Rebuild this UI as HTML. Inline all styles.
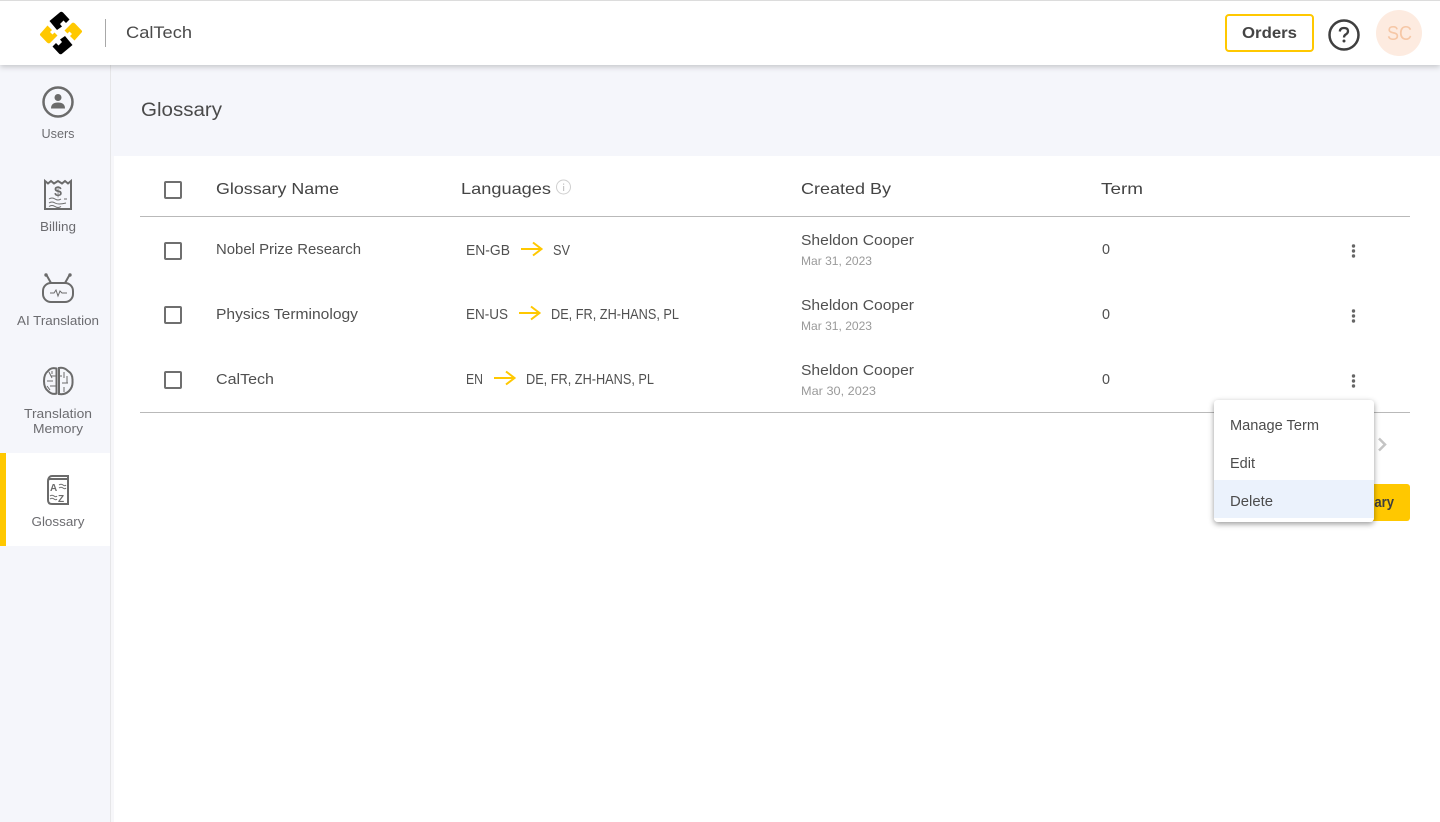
<!DOCTYPE html>
<html><head><meta charset="utf-8"><title>Glossary</title>
<style>
html,body{margin:0;padding:0;width:1440px;height:822px;overflow:hidden;background:#fff}
svg{display:block}
text{font-family:"Liberation Sans",sans-serif;fill:#4a4a4a}
.h{font-size:16px;fill:#444}
.r{font-size:15px;fill:#505050}
.d{font-size:12px;fill:#9a9a9a}
.n{font-size:12.500px;fill:#6c6c70;text-anchor:middle}
.m{font-size:14.500px;fill:#4c4c4c}
.cb{fill:none;stroke:#6f6f6f;stroke-width:2}
.ic{fill:none;stroke:#6b6b6b;stroke-width:2}
.thin{fill:none;stroke:#6b6b6b;stroke-width:1}
.ar{fill:none;stroke:#ffc800;stroke-width:2}
.dot{fill:#666}
</style></head><body>
<svg width="1440" height="822" viewBox="0 0 1440 822" xmlns="http://www.w3.org/2000/svg">
<defs>
<filter id="sh" x="-10%" y="-20%" width="120%" height="150%"><feDropShadow dx="0" dy="2" stdDeviation="3" flood-color="#000" flood-opacity=".2"/></filter>
<filter id="mn" x="-20%" y="-20%" width="140%" height="150%"><feDropShadow dx="0" dy="2" stdDeviation="3" flood-color="#000" flood-opacity=".4"/></filter>
</defs>
<rect width="1440" height="822" fill="#fff"/>
<!-- sidebar + title band -->
<rect x="0" y="65" width="1440" height="91" fill="#f5f6fb"/>
<rect x="0" y="65" width="110" height="757" fill="#f5f6fb"/>
<rect x="110" y="65" width="1" height="757" fill="#e6e6e8"/>
<rect x="111" y="156" width="3" height="666" fill="#f7f7fa"/>
<!-- active nav -->
<rect x="0" y="453" width="110" height="93" fill="#fff"/>
<rect x="0" y="453" width="6" height="93" fill="#ffc800"/>
<!-- header -->
<rect x="0" y="0" width="1440" height="65" fill="#fff" filter="url(#sh)"/>
<rect x="0" y="0" width="1440" height="1" fill="#dcdcdc"/>
<!-- logo -->
<g id="logo">
<path d="M49.500 21L60 12.300Q61.500 11 63 12.500L69.500 19.500L66 23L63.500 20.500L60 24L62 26.500L57 30Z" fill="#000"/>
<path d="M49.500 21L60 12.300Q61.500 11 63 12.500L69.500 19.500L66 23L63.500 20.500L60 24L62 26.500L57 30Z" fill="#000" transform="rotate(180 61 33)"/>
<path d="M40 34L47.500 25.500L52 30L50 32L52.500 34.500L54.500 32.500L57.500 35.500L50 43Q48.500 44 47 42.500L40.800 36Q39.500 35 40 34Z" fill="#ffc800"/>
<path d="M40 34L47.500 25.500L52 30L50 32L52.500 34.500L54.500 32.500L57.500 35.500L50 43Q48.500 44 47 42.500L40.800 36Q39.500 35 40 34Z" fill="#ffc800" transform="rotate(180 61 33)"/>
</g>
<rect x="105" y="19" width="1" height="28" fill="#a8a8a8"/>
<text x="126" y="38" textLength="66" lengthAdjust="spacingAndGlyphs" style="font-size:17px;fill:#4a4a4a">CalTech</text>
<!-- orders -->
<rect x="1226" y="15" width="87" height="36" rx="3" fill="#fff" stroke="#ffc800" stroke-width="2"/>
<text x="1242" y="38" textLength="55" lengthAdjust="spacingAndGlyphs" style="font-size:16px;font-weight:700;fill:#444">Orders</text>
<circle cx="1344" cy="35" r="14.500" fill="none" stroke="#3f3f3f" stroke-width="2.500"/>
<path d="M1339.800 31.500Q1340 28 1344 28Q1348 28 1348 31Q1348 33 1346 34.300Q1344 35.300 1344 37.500" fill="none" stroke="#3f3f3f" stroke-width="2.300"/>
<circle cx="1344" cy="41" r="1.500" fill="#3f3f3f"/>
<circle cx="1399" cy="33" r="23" fill="#fdebe0"/>
<text x="1387" y="40" textLength="25" lengthAdjust="spacingAndGlyphs" style="font-size:20px;fill:#f6c7a6">SC</text>
<!-- title -->
<text x="141" y="116" textLength="81" lengthAdjust="spacingAndGlyphs" style="font-size:19px;fill:#4a4a4a">Glossary</text>
<!-- nav: users -->
<circle cx="58" cy="102" r="14.500" fill="none" stroke="#6b6b6b" stroke-width="2.500"/>
<circle cx="58" cy="97.500" r="3.500" fill="#6b6b6b"/>
<path d="M51 108.500Q51 102.500 58 102.500Q65 102.500 65 108.500Z" fill="#6b6b6b"/>
<text class="n" x="58" y="138" textLength="33" lengthAdjust="spacingAndGlyphs">Users</text>
<!-- billing -->
<path class="ic" d="M45 181V209H71V181L68 183.500L65 181L62 183.500L58 181L54 183.500L51 181L48 183.500Z"/>
<text x="58" y="196" text-anchor="middle" style="font-size:14px;font-weight:700;fill:#6b6b6b">$</text>
<path class="thin" stroke-width="1.500" d="M49 199Q52 197 55 199T61 199M49 203Q52 201 55 203T66 203M49 206.500Q52 204.500 55 206.500T61 206.500"/>
<path class="thin" d="M64 199H67"/>
<text class="n" x="58" y="231" textLength="36" lengthAdjust="spacingAndGlyphs">Billing</text>
<!-- AI -->
<rect x="43" y="283" width="30" height="19" rx="8" class="ic" stroke-width="2.500"/>
<path class="ic" d="M51 283L46.500 275M65 283L69.500 275"/>
<circle cx="46" cy="275" r="1.700" fill="#6b6b6b"/><circle cx="70" cy="275" r="1.700" fill="#6b6b6b"/>
<path class="thin" d="M50 293H54L56 290L58 296L60 291L62 293H67"/>
<text class="n" x="58" y="325" textLength="82" lengthAdjust="spacingAndGlyphs">AI Translation</text>
<!-- memory -->
<path d="M56.500 368.500Q51 367 48 371Q44 374 44 381Q44 388 48 391Q52 395 56.500 393.500Z" class="ic"/>
<path d="M59 368V394Q65 395 69 391Q73 387 72.500 381Q73 374 68 371Q64 367 59 368Z" class="ic" stroke-width="1.500"/>
<path class="thin" stroke-width="1.500" d="M56 376H51M47 381H53M56 386H50M49 372L52 378M64 372V378M67 376V383M62 383H68M64 387V392M62 376H60M47 386L50 390M52 371V374"/>
<text class="n" x="58" y="418" textLength="68" lengthAdjust="spacingAndGlyphs">Translation</text>
<text class="n" x="58" y="433" textLength="50" lengthAdjust="spacingAndGlyphs">Memory</text>
<!-- glossary icon -->
<path class="ic" stroke-width="1.500" d="M48 481V500Q48 504 52 504H68V479H50Q48 479 48 481ZM48 480Q49 476 52 476H68V479"/>
<text x="50" y="491" style="font-size:10px;font-weight:700;fill:#6b6b6b">A</text>
<text x="58" y="502" style="font-size:10px;font-weight:700;fill:#6b6b6b">Z</text>
<path class="thin" d="M59 485Q61 483.500 63 485T66 485M59 488Q61 486.500 63 488T66 488M50 496Q52 494.500 54 496T57 496M50 499Q52 497.500 54 499T57 499"/>
<text class="n" x="58" y="526" textLength="53" lengthAdjust="spacingAndGlyphs">Glossary</text>
<!-- table head -->
<rect class="cb" x="165" y="182" width="16" height="16" rx="1"/>
<text class="h" x="216" y="194" textLength="123" lengthAdjust="spacingAndGlyphs">Glossary Name</text>
<text class="h" x="461" y="194" textLength="90" lengthAdjust="spacingAndGlyphs">Languages</text>
<circle cx="563.500" cy="187" r="7" fill="none" stroke="#cfcfcf" stroke-width="1"/>
<rect x="563" y="186" width="1.200" height="5" fill="#c6c6c6"/><rect x="563" y="183.500" width="1.200" height="1.300" fill="#c6c6c6"/>
<text class="h" x="801" y="194" textLength="90" lengthAdjust="spacingAndGlyphs">Created By</text>
<text class="h" x="1101" y="194" textLength="42" lengthAdjust="spacingAndGlyphs">Term</text>
<rect x="140" y="216" width="1270" height="1" fill="#b9b9b9"/>
<!-- row 1 -->
<rect class="cb" x="165" y="243" width="16" height="16" rx="1"/>
<text class="r" x="216" y="254" textLength="145" lengthAdjust="spacingAndGlyphs">Nobel Prize Research</text>
<text class="r" x="466" y="255" textLength="44" lengthAdjust="spacingAndGlyphs">EN-GB</text>
<path class="ar" d="M521 249H541M533 242.500L541.500 249L533 255.500"/>
<text class="r" x="553" y="255" textLength="17" lengthAdjust="spacingAndGlyphs">SV</text>
<text class="r" x="801" y="245" textLength="113" lengthAdjust="spacingAndGlyphs">Sheldon Cooper</text>
<text class="d" x="801" y="265" textLength="71" lengthAdjust="spacingAndGlyphs">Mar 31, 2023</text>
<text class="r" x="1102" y="254" textLength="8" lengthAdjust="spacingAndGlyphs">0</text>
<circle class="dot" cx="1353.500" cy="246" r="1.700"/><circle class="dot" cx="1353.500" cy="251" r="1.700"/><circle class="dot" cx="1353.500" cy="256" r="1.700"/>
<!-- row 2 -->
<rect class="cb" x="165" y="307" width="16" height="16" rx="1"/>
<text class="r" x="216" y="319" textLength="142" lengthAdjust="spacingAndGlyphs">Physics Terminology</text>
<text class="r" x="466" y="319" textLength="42" lengthAdjust="spacingAndGlyphs">EN-US</text>
<path class="ar" d="M519 313H539M531 306.500L539.500 313L531 319.500"/>
<text class="r" x="551" y="319" textLength="128" lengthAdjust="spacingAndGlyphs">DE, FR, ZH-HANS, PL</text>
<text class="r" x="801" y="310" textLength="113" lengthAdjust="spacingAndGlyphs">Sheldon Cooper</text>
<text class="d" x="801" y="330" textLength="71" lengthAdjust="spacingAndGlyphs">Mar 31, 2023</text>
<text class="r" x="1102" y="319" textLength="8" lengthAdjust="spacingAndGlyphs">0</text>
<circle class="dot" cx="1353.500" cy="311" r="1.700"/><circle class="dot" cx="1353.500" cy="316" r="1.700"/><circle class="dot" cx="1353.500" cy="321" r="1.700"/>
<!-- row 3 -->
<rect class="cb" x="165" y="372" width="16" height="16" rx="1"/>
<text class="r" x="216" y="384" textLength="58" lengthAdjust="spacingAndGlyphs">CalTech</text>
<text class="r" x="466" y="384" textLength="17" lengthAdjust="spacingAndGlyphs">EN</text>
<path class="ar" d="M494 378H514M506 371.500L514.500 378L506 384.500"/>
<text class="r" x="526" y="384" textLength="128" lengthAdjust="spacingAndGlyphs">DE, FR, ZH-HANS, PL</text>
<text class="r" x="801" y="375" textLength="113" lengthAdjust="spacingAndGlyphs">Sheldon Cooper</text>
<text class="d" x="801" y="395" textLength="75" lengthAdjust="spacingAndGlyphs">Mar 30, 2023</text>
<text class="r" x="1102" y="384" textLength="8" lengthAdjust="spacingAndGlyphs">0</text>
<circle class="dot" cx="1353.500" cy="376" r="1.700"/><circle class="dot" cx="1353.500" cy="381" r="1.700"/><circle class="dot" cx="1353.500" cy="386" r="1.700"/>
<rect x="140" y="412" width="1270" height="1" fill="#b9b9b9"/>
<!-- pager & button behind menu -->
<path d="M1379 438.500L1385 444.500L1379 450.500" fill="none" stroke="#c4c4c4" stroke-width="2.500"/>
<rect x="1300" y="484" width="110" height="37" rx="3" fill="#ffc800"/>
<text x="1338" y="507" textLength="56" lengthAdjust="spacingAndGlyphs" style="font-size:15px;font-weight:700;fill:#3f3f3f">Glossary</text>
<!-- menu -->
<rect x="1214" y="400" width="160" height="122" rx="4" fill="#fff" filter="url(#mn)"/>
<rect x="1214" y="480" width="160" height="38" fill="#ebf2fc"/>
<text class="m" x="1230" y="430" textLength="89" lengthAdjust="spacingAndGlyphs">Manage Term</text>
<text class="m" x="1230" y="468" textLength="25" lengthAdjust="spacingAndGlyphs">Edit</text>
<text class="m" x="1230" y="506" textLength="43" lengthAdjust="spacingAndGlyphs">Delete</text>
</svg>
</body></html>
